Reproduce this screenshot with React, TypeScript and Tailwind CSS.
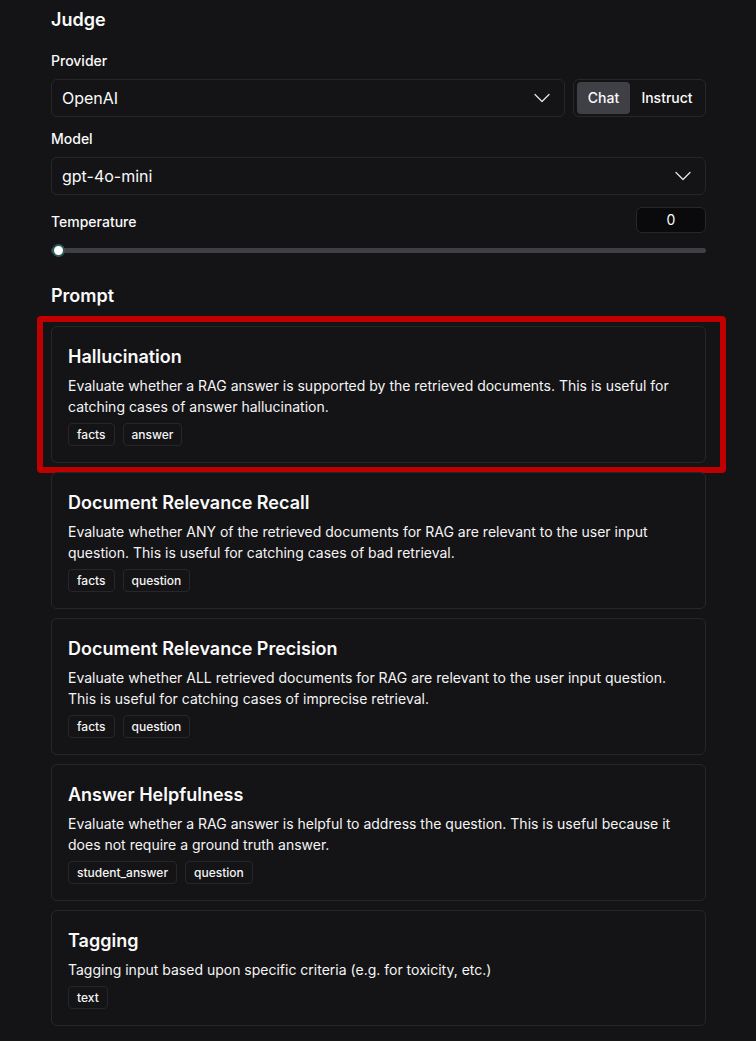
import { ChevronDown } from 'lucide-react'

interface PromptItem {
  title: string
  description: string
  tags: string[]
}

const prompts: PromptItem[] = [
  {
    title: 'Hallucination',
    description:
      'Evaluate whether a RAG answer is supported by the retrieved documents. This is useful for catching cases of answer hallucination.',
    tags: ['facts', 'answer'],
  },
  {
    title: 'Document Relevance Recall',
    description:
      'Evaluate whether ANY of the retrieved documents for RAG are relevant to the user input question. This is useful for catching cases of bad retrieval.',
    tags: ['facts', 'question'],
  },
  {
    title: 'Document Relevance Precision',
    description:
      'Evaluate whether ALL retrieved documents for RAG are relevant to the user input question. This is useful for catching cases of imprecise retrieval.',
    tags: ['facts', 'question'],
  },
  {
    title: 'Answer Helpfulness',
    description:
      'Evaluate whether a RAG answer is helpful to address the question. This is useful because it does not require a ground truth answer.',
    tags: ['student_answer', 'question'],
  },
  {
    title: 'Tagging',
    description: 'Tagging input based upon specific criteria (e.g. for toxicity, etc.)',
    tags: ['text'],
  },
]

function Select({ value }: { value: string }) {
  return (
    <div className="flex h-[38px] flex-1 items-center justify-between rounded-md border border-[#27272a] pl-[10px] pr-[8px]">
      <span className="text-base text-[#fafafa]">{value}</span>
      <ChevronDown size={28} strokeWidth={1.1} className="text-[#e4e4e7]" />
    </div>
  )
}

function PromptCard({ item }: { item: PromptItem }) {
  return (
    <div className="rounded-md border border-[#27272a] px-4 pt-4 pb-4">
      <div className="text-lg leading-7 font-semibold text-[#fafafa]">{item.title}</div>
      <p className="mt-[4px] text-sm leading-[21px] text-[#f4f4f5]">{item.description}</p>
      <div className="mt-[6px] flex gap-2">
        {item.tags.map((tag) => (
          <span
            key={tag}
            className="rounded border border-[#27272a] px-2 py-[3px] text-xs leading-[15px] font-medium text-[#f4f4f5]"
          >
            {tag}
          </span>
        ))}
      </div>
    </div>
  )
}

export default function App() {
  return (
    <div
      className="min-h-[1041px] bg-[#141416] text-[#fafafa]"
      style={{ fontFamily: 'Inter, "Noto Sans", sans-serif' }}
    >
      <div className="ml-[51px] w-[655px] pt-[6px]">
        {/* Judge */}
        <h2 className="text-lg leading-7 font-semibold">Judge</h2>

        <div className="mt-[17px] text-sm leading-5 font-medium">Provider</div>
        <div className="mt-2 flex gap-2">
          <Select value="OpenAI" />
          <div className="flex h-[38px] w-[133px] items-center rounded-md border border-[#27272a] p-[3px]">
            <span className="flex h-[32px] w-[53px] items-center justify-center rounded bg-[#3f3f46] text-sm font-medium">
              Chat
            </span>
            <span className="flex h-[32px] flex-1 items-center justify-center pl-[2px] text-sm font-medium">
              Instruct
            </span>
          </div>
        </div>

        <div className="mt-3 text-sm leading-5 font-medium">Model</div>
        <div className="mt-2 flex">
          <Select value="gpt-4o-mini" />
        </div>

        <div className="mt-3 flex h-[26px] items-center justify-between">
          <span className="pt-[3px] text-sm leading-5 font-medium">Temperature</span>
          <div className="flex h-[26px] w-[70px] items-center justify-center rounded-md border border-[#27272a] bg-[#0a0a0c] text-sm">
            0
          </div>
        </div>
        <div className="relative mt-[11px] flex h-3 items-center">
          <div className="h-[5px] w-full rounded-full bg-[#3f3f46]" />
          <div className="absolute left-[1px] top-0 h-[13px] w-[13px] rounded-full border-2 border-[#2f5c5c] bg-white" />
        </div>

        {/* Prompt */}
        <h2 className="mt-[26px] text-lg leading-7 font-semibold">Prompt</h2>
        <div className="mt-4 flex flex-col gap-[9px]">
          {prompts.map((item, i) => (
            <div key={item.title} className="relative">
              <PromptCard item={item} />
              {i === 0 && (
                <div className="pointer-events-none absolute -top-[10px] -bottom-[10px] -left-[14px] -right-[20px] rounded-sm border-[6px] border-[#c00000]" />
              )}
            </div>
          ))}
        </div>
      </div>
    </div>
  )
}
